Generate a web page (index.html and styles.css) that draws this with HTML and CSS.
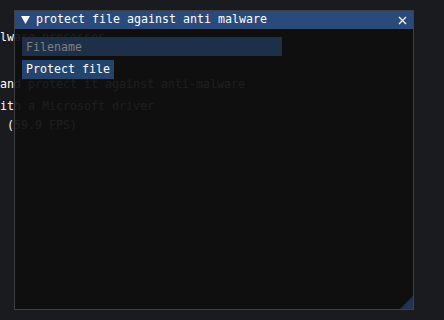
FILE: index.html
```html
<!DOCTYPE html>
<html lang="en">
<head>
  <meta charset="UTF-8">
  <title>protect file against anti malware</title>
  <link rel="stylesheet" href="styles.css">
</head>
<body>

  <!-- text of the main viewport, partly hidden by the window -->
  <div class="backdrop">
    <div class="bg-line line-1">lware processes</div>
    <div class="bg-line line-2">and protect it against anti-malware</div>
    <div class="bg-line line-3">ith a Microsoft driver</div>
    <div class="bg-line line-4"> (59.9 FPS)</div>
  </div>

  <!-- floating window -->
  <div class="window">
    <div class="title-bar">
      <svg class="collapse-arrow" width="9" height="8" viewBox="0 0 9 8">
        <polygon points="0,0 9,0 4.5,8" fill="#ffffff"/>
      </svg>
      <span class="title">protect file against anti malware</span>
      <svg class="close-btn" width="9" height="9" viewBox="0 0 9 9">
        <path d="M1 1 L8 8 M8 1 L1 8" stroke="#ffffff" stroke-width="1.2" fill="none"/>
      </svg>
    </div>
    <div class="content">
      <input class="text-input" type="text" placeholder="Filename">
      <button class="btn">Protect file</button>
    </div>
    <div class="resize-grip"></div>
  </div>

</body>
</html>
```

FILE: styles.css
```css
body {
  margin: 0;
  background: #1a1b1e;
  font-family: 'DejaVu Sans Mono', 'Liberation Mono', monospace;
  font-size: 11.63px;
  line-height: 13px;
  color: #ffffff;
  overflow: hidden;
}

.backdrop {
  padding-top: 31px;
}

.bg-line {
  height: 13px;
  white-space: pre;
}

.line-2 {
  margin-top: 34px;
}

.line-3 {
  margin-top: 9px;
}

.line-4 {
  margin-top: 6px;
}

.window {
  position: absolute;
  left: 14px;
  top: 10px;
  width: 400px;
  height: 300px;
  box-sizing: border-box;
  background: rgba(15, 15, 15, 0.94);
  border: 1px solid rgba(110, 110, 128, 0.5);
}

.title-bar {
  display: flex;
  align-items: flex-start;
  height: 18px;
  box-sizing: border-box;
  padding-top: 2px;
  background: #294a7a;
}

.collapse-arrow {
  margin: 3px 6px 0 6px;
  flex: none;
}

.title {
  flex: 1;
  white-space: pre;
}

.close-btn {
  margin: 3px 6px 0 0;
  flex: none;
}

.content {
  display: flex;
  flex-direction: column;
  align-items: flex-start;
  gap: 4px;
  padding: 8px 7px;
}

.text-input {
  width: 260px;
  height: 19px;
  box-sizing: border-box;
  margin: 0;
  padding: 3px 4px;
  border: none;
  outline: none;
  background: #1d2f49;
  font: inherit;
  color: #ffffff;
}

.text-input::placeholder {
  color: #808080;
  opacity: 1;
}

.btn {
  height: 19px;
  box-sizing: border-box;
  margin: 0;
  padding: 3px 4px;
  border: none;
  background: #23456d;
  font: inherit;
  color: #ffffff;
}

.resize-grip {
  position: absolute;
  right: 0;
  bottom: 0;
  width: 13px;
  height: 13px;
  background: #1e3452;
  clip-path: polygon(100% 0, 100% 100%, 0 100%);
}
```
